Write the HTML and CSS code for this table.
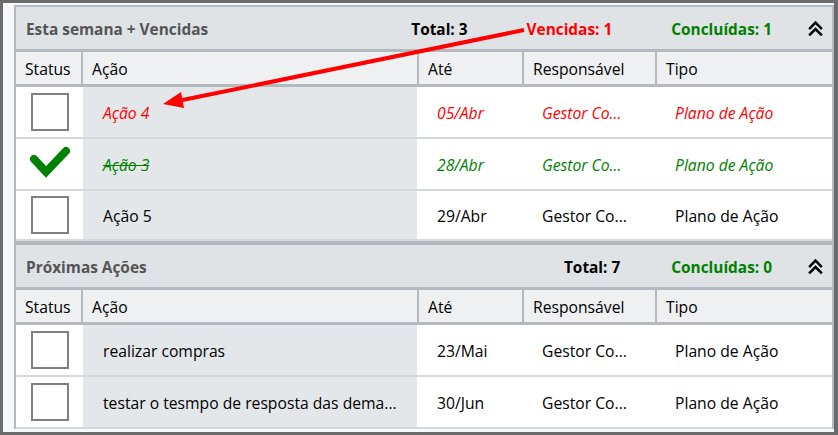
FILE: index.html
```html
<!DOCTYPE html>
<html lang="pt">
<head>
<meta charset="utf-8">
<title>Ações</title>
<link rel="stylesheet" href="styles.css">
</head>
<body>
<div class="frame">
  <div class="page">
    <section class="panel">
      <div class="panel-head">
        <span class="title">Esta semana + Vencidas</span>
        <div class="counts">
          <span class="count total">Total: 3</span>
          <span class="count late">Vencidas: 1</span>
          <span class="count done">Concluídas: 1</span>
          <svg class="collapse" width="17" height="17" viewBox="0 0 16 16"><polyline points="2,8.5 8,2.5 14,8.5"/><polyline points="2,14.5 8,8.5 14,14.5"/></svg>
        </div>
      </div>
      <div class="grid head-row">
        <div class="th">Status</div>
        <div class="th">Ação</div>
        <div class="th">Até</div>
        <div class="th">Responsável</div>
        <div class="th">Tipo</div>
      </div>
      <div class="grid row is-late">
        <div class="td status"><span class="box"></span></div>
        <div class="td action">Ação 4</div>
        <div class="td">05/Abr</div>
        <div class="td">Gestor Co...</div>
        <div class="td">Plano de Ação</div>
      </div>
      <div class="grid row is-done">
        <div class="td status"><svg class="check" width="42" height="34" viewBox="0 0 42 34"><polyline points="5,14 17,27 37,6"/></svg></div>
        <div class="td action"><s>Ação 3</s></div>
        <div class="td">28/Abr</div>
        <div class="td">Gestor Co...</div>
        <div class="td">Plano de Ação</div>
      </div>
      <div class="grid row">
        <div class="td status"><span class="box"></span></div>
        <div class="td action">Ação 5</div>
        <div class="td">29/Abr</div>
        <div class="td">Gestor Co...</div>
        <div class="td">Plano de Ação</div>
      </div>
    </section>
    <section class="panel">
      <div class="panel-head">
        <span class="title">Próximas Ações</span>
        <div class="counts">
          <span class="count total narrow">Total: 7</span>
          <span class="count done">Concluídas: 0</span>
          <svg class="collapse" width="17" height="17" viewBox="0 0 16 16"><polyline points="2,8.5 8,2.5 14,8.5"/><polyline points="2,14.5 8,8.5 14,14.5"/></svg>
        </div>
      </div>
      <div class="grid head-row">
        <div class="th">Status</div>
        <div class="th">Ação</div>
        <div class="th">Até</div>
        <div class="th">Responsável</div>
        <div class="th">Tipo</div>
      </div>
      <div class="grid row">
        <div class="td status"><span class="box"></span></div>
        <div class="td action">realizar compras</div>
        <div class="td">23/Mai</div>
        <div class="td">Gestor Co...</div>
        <div class="td">Plano de Ação</div>
      </div>
      <div class="grid row">
        <div class="td status"><span class="box"></span></div>
        <div class="td action">testar o tesmpo de resposta das dema...</div>
        <div class="td">30/Jun</div>
        <div class="td">Gestor Co...</div>
        <div class="td">Plano de Ação</div>
      </div>
    </section>
  </div>
  <svg class="arrow" width="838" height="435" viewBox="0 0 838 435">
    <line x1="524" y1="30" x2="180" y2="100.5"/>
    <polygon points="163,104 181,92 184,108"/>
  </svg>
</div>
</body>
</html>
```

FILE: styles.css
```css
* { box-sizing: border-box; }
html, body {
  margin: 0;
  padding: 0;
  width: 838px;
  height: 435px;
  overflow: hidden;
  background: #6b6b6b;
}
body {
  font-family: "Open Sans", "Noto Sans", sans-serif;
  font-size: 15.7px;
  color: #000;
}
.frame {
  position: relative;
  width: 838px;
  height: 435px;
  padding: 3px 4px 3px 3px;
}
.page {
  height: 100%;
  background: #f7f8f9;
  padding: 2px 0 0 11px;
  overflow: hidden;
}
.panel {
  border-left: 2px solid #b3b9bf;
  border-top: 2px solid #b3b9bf;
  border-right: 2px solid #b3b9bf;
  background: #fff;
}
.panel + .panel { border-top-width: 4px; }
.panel-head {
  height: 45px;
  background: #dfe3e6;
  display: flex;
  align-items: center;
  padding: 3px 8px 0 10px;
  font-size: 15.4px;
  font-weight: 700;
  border-bottom: 3px solid #b3b9bf;
}
.title { color: #555; flex: 1; }
.counts { display: flex; align-items: center; }
.count { margin-right: 59px; }
.count.narrow { margin-right: 51px; }
.count.done { margin-right: 35px; color: #008000; }
.count.late { color: #ff0000; }
.collapse { fill: none; stroke: #000; stroke-width: 2.4; margin-top: -2px; }
.grid {
  display: grid;
  grid-template-columns: 67px 336px 105px 133px 1fr;
}
.head-row {
  height: 35px;
  background: #eef0f2;
  border-bottom: 3px solid #b3b9bf;
}
.th {
  display: flex;
  align-items: center;
  padding: 2px 0 0 9px;
  border-right: 2px solid #b3b9bf;
}
.th:last-child { border-right: 0; }
.row {
  height: 52px;
  border-bottom: 2px solid #d5d9dd;
}
.panel:first-child .row:last-child { height: 50px; }
.td {
  display: flex;
  align-items: center;
  padding: 1px 0 0 18px;
  white-space: nowrap;
  overflow: hidden;
}
.td.status { justify-content: center; padding: 0; }
.td.action { background: #e4e7ea; padding-left: 20px; margin-right: 2px; }
.is-late .td { color: #ff0000; font-style: italic; }
.is-done .td { color: #008000; font-style: italic; }
.box {
  width: 38px;
  height: 38px;
  border: 2px solid #808080;
  background: #fff;
}
.check { fill: none; stroke: #008000; stroke-width: 8; stroke-linejoin: miter; stroke-linecap: round; margin-top: -4px; }
.arrow {
  position: absolute;
  left: 0;
  top: 0;
  pointer-events: none;
}
.arrow line { stroke: #ff0000; stroke-width: 4; }
.arrow polygon { fill: #ff0000; }
```
